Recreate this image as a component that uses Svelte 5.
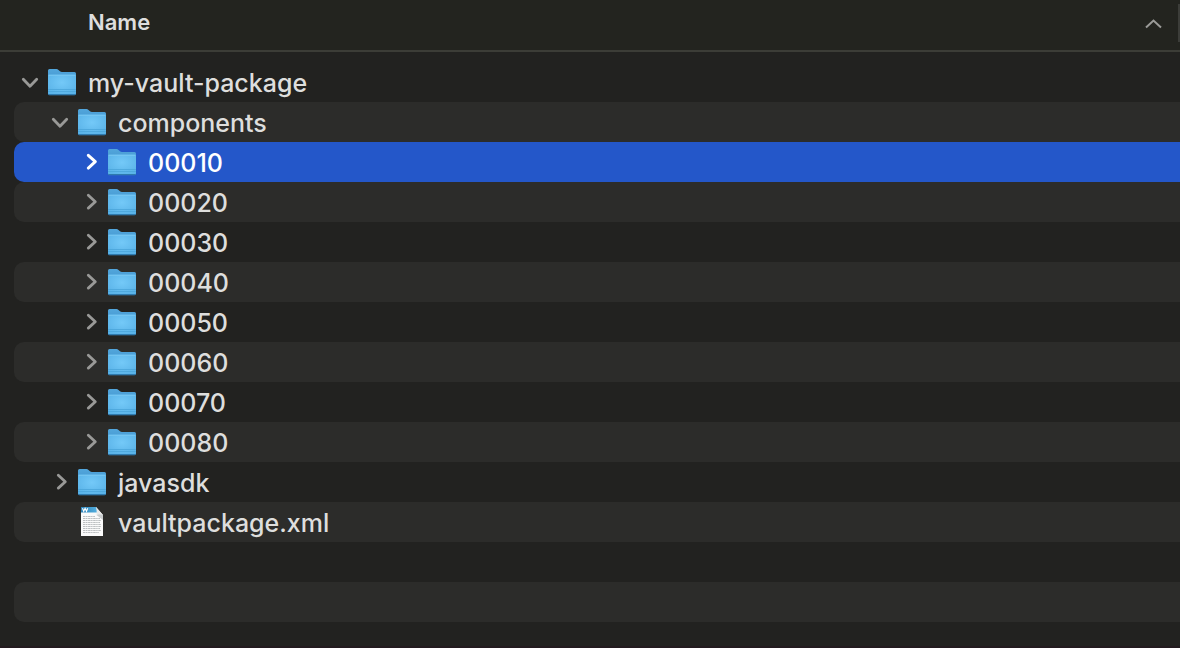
<script lang="ts">
  type Item = { name: string; kind: string; level: number; open?: boolean };

  const numbered = ['00010', '00020', '00030', '00040', '00050', '00060', '00070', '00080'];

  let items: Item[] = $state([
    { name: 'my-vault-package', kind: 'folder', level: 0, open: true },
    { name: 'components', kind: 'folder', level: 1, open: true },
    ...numbered.map(name => ({ name, kind: 'folder', level: 2, open: false })),
    { name: 'javasdk', kind: 'folder', level: 1, open: false },
    { name: 'vaultpackage.xml', kind: 'file', level: 1 }
  ]);
  let selected = $state('00010');
  let ascending = $state(true);

  // an item is hidden when any folder above it is closed
  let visible = $derived.by(() => {
    let closedAt = Infinity;
    return items.filter(item => {
      if (item.level > closedAt) return false;
      closedAt = item.kind === 'folder' && !item.open ? item.level : Infinity;
      return true;
    });
  });

  // keep the striping going below the last item
  let blanks = $derived(Math.max(0, 14 - visible.length));
</script>

<svg class="defs" aria-hidden="true">
  <defs>
    <linearGradient id="folder-back" x1="0" y1="0" x2="0" y2="1">
      <stop offset="0" stop-color="#52a6dc" />
      <stop offset="1" stop-color="#3484bf" />
    </linearGradient>
    <radialGradient id="folder-front" cx="0.5" cy="0.4" r="0.65">
      <stop offset="0" stop-color="#74c9f8" />
      <stop offset="1" stop-color="#5ab3e8" />
    </radialGradient>
    <linearGradient id="doc-band" x1="0" y1="0" x2="1" y2="0">
      <stop offset="0" stop-color="#2f83b8" />
      <stop offset="1" stop-color="#58b4e4" />
    </linearGradient>
  </defs>
</svg>

<div class="finder">
  <header>
    <button class="column" onclick={() => (ascending = !ascending)}>
      <span>Name</span>
      <svg class="sort" class:flipped={!ascending} width="18" height="12" viewBox="0 0 18 12" aria-hidden="true">
        <path d="M2 9.5 9.500 2.500l7.500 7" />
      </svg>
    </button>
    <span class="divider"></span>
  </header>

  <ul>
    {#each visible as item (item.name)}
      <li class="level-{item.level}" class:selected={selected === item.name}>
        {#if item.kind === 'folder'}
          <button class="toggle" aria-label="Toggle {item.name}" aria-expanded={item.open} onclick={() => (item.open = !item.open)}>
            <svg width="24" height="24" viewBox="0 0 24 24" aria-hidden="true">
              {#if item.open}
                <path d="m5.300 9.200 6.700 7 6.700-7" />
              {:else}
                <path d="m10.300 5.300 7 6.400-7 6.400" />
              {/if}
            </svg>
          </button>
        {:else}
          <span class="toggle"></span>
        {/if}
        <button class="item" onclick={() => (selected = item.name)}>
          {#if item.kind === 'folder'}
            <svg class="icon" width="32" height="32" viewBox="0 0 32 32" aria-hidden="true">
              <path d="M2 4.500Q2 3 3.500 3H10.500Q11.500 3 12.500 4L14 5.300Q14.700 6 16 6H28.500Q30 6 30 7.500V27.500Q30 29.200 28.500 29.200H3.500Q2 29.200 2 27.500Z" fill="url(#folder-back)" />
              <path d="M2 10Q2 8.600 3.500 8.600H28.500Q30 8.600 30 10V27Q30 28.500 28.500 28.500H3.500Q2 28.500 2 27Z" fill="url(#folder-front)" />
              <path d="M2.500 9.300H29.500" stroke="#7cc9f3" stroke-width="0.9" />
              <path d="M2 23.500H30M2 25.500H30" stroke="#4aa4d9" stroke-width="0.8" />
              <path d="M2.500 28.600H29.500" stroke="#2d77ab" stroke-width="1" />
            </svg>
          {:else}
            <svg class="icon" width="32" height="32" viewBox="0 0 32 32" aria-hidden="true">
              <path d="M5 1H20L27 9V30H5Z" fill="#fafafa" />
              <path d="M5 1H20L23 6.500H5Z" fill="url(#doc-band)" />
              <path d="m6.500 2.300 1.200 3 1.400-3 1.400 3 1.200-3" fill="none" stroke="#fff" stroke-width="1.100" />
              <path d="M20 1 27 9Q23 7.500 20.500 9Q21 5 20 1Z" fill="#e9e9e9" />
              <path d="M20.500 9Q23 7.500 27 9V14Z" fill="#c9cccd" />
              <g stroke="#b4b8ba" stroke-width="0.9" stroke-dasharray="2.500 0.500 1.500 0.600">
                <path d="M7 10.500H19M7 12.500H24M7 14.500H25M7 16.500H24M7 18.500H25M7 20.500H25M7 22.500H24M7 24.500H25M7 26.500H23" />
              </g>
            </svg>
          {/if}
          <span class="name">{item.name}</span>
        </button>
      </li>
    {/each}
    {#each { length: blanks } as _}
      <li aria-hidden="true"></li>
    {/each}
  </ul>
</div>

<style>
  :global(body) {
    background: #222220;
  }

  .defs {
    position: absolute;
    width: 0;
    height: 0;
  }

  .finder {
    box-sizing: border-box;
    min-height: 100vh;
    border-bottom: 2px solid #231b1f;
    background: #222220;
    color: #dededd;
    font-family: Inter, "Liberation Sans", sans-serif;
    overflow: hidden;
  }

  button {
    border: none;
    padding: 0;
    background: none;
    color: inherit;
    font: inherit;
    text-align: left;
  }

  header {
    display: flex;
    height: 50px;
    border-bottom: 2px solid #3c3d37;
    background: #23241f;
  }

  .column {
    display: flex;
    flex: 1;
    align-items: center;
    justify-content: space-between;
    padding: 0 16px 6px 88px;
    font-size: 22px;
    font-weight: 600;
  }

  .sort {
    margin-top: 4px;
    fill: none;
    stroke: #9b9b98;
    stroke-width: 2;
  }

  .flipped {
    transform: scaleY(-1);
  }

  .divider {
    width: 2px;
    height: 38px;
    margin-top: 4px;
    background: #3c3d39;
  }

  ul {
    margin: 0;
    padding: 10px 0 0 14px;
    list-style: none;
  }

  li {
    display: flex;
    align-items: center;
    height: 40px;
    border-radius: 10px 0 0 10px;
  }

  li:nth-child(even) {
    background: #2c2c2a;
  }

  li.selected {
    background: #2457c9;
    color: #fff;
  }

  .level-0 {
    padding-left: 4px;
  }

  .level-1 {
    padding-left: 34px;
  }

  .level-2 {
    padding-left: 64px;
  }

  .toggle {
    display: flex;
    width: 24px;
    height: 24px;
    margin-right: 4px;
  }

  .toggle path {
    fill: none;
    stroke: #999997;
    stroke-width: 2.8;
    stroke-linecap: round;
    stroke-linejoin: round;
  }

  .selected .toggle path {
    stroke: #fff;
    stroke-width: 3;
  }

  .item {
    display: flex;
    flex: 1;
    align-items: center;
    gap: 10px;
    height: 40px;
    font-size: 25px;
    font-weight: 500;
    white-space: nowrap;
  }

  .name {
    padding-top: 2px;
  }

  .icon {
    flex: none;
  }
</style>
